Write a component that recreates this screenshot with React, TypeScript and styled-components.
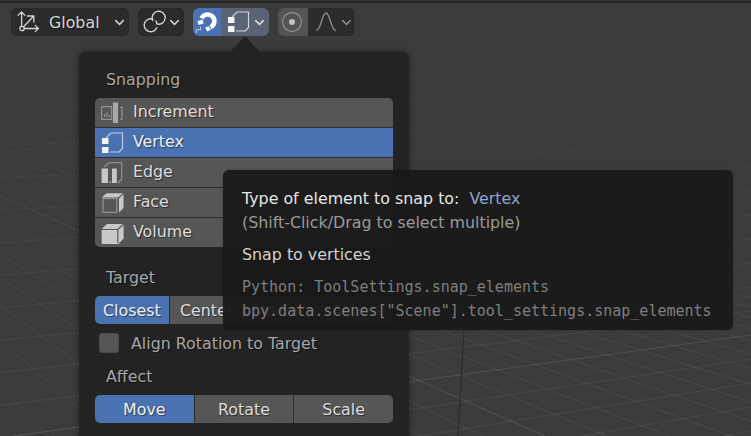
import React from "react";
import styled, { createGlobalStyle } from "styled-components";
import { ChevronDown } from "lucide-react";

const GlobalStyle = createGlobalStyle`
  html, body {
    margin: 0;
    padding: 0;
    background: #3b3b3b;
  }
`;

const Screen = styled.div`
  position: relative;
  width: 751px;
  height: 436px;
  overflow: hidden;
  background: #3b3b3b;
  font-family: "DejaVu Sans", sans-serif;
  font-size: 15.85px;
`;

const TopEdge = styled.div`
  height: 2px;
  background: #272727;
  border-top: 1px solid #333;
  position: relative;
`;

const Toolbar = styled.div`
  position: relative;
  display: flex;
  gap: 9px;
  padding: 5px 11px 0;
`;

const Pill = styled.div<{ $width: number }>`
  display: flex;
  width: ${(p) => p.$width}px;
  height: 28px;
  border-radius: 6px;
  overflow: hidden;
  background: #2b2b2b;
  color: #cfcfcf;
  box-shadow: inset 0 0 0 1px #282828;
`;

const PillPart = styled.div<{ $tone?: string; $width?: number; $inset?: number }>`
  display: flex;
  align-items: center;
  flex: ${(p) => (p.$width ? `0 0 ${p.$width}px` : "1")};
  padding-left: ${(p) => p.$inset ?? 0}px;
  background: ${(p) => p.$tone ?? "transparent"};
  svg {
    display: block;
    flex: none;
  }
`;

const GapEnd = styled.span`
  flex: none;
  width: 2px;
`;

const GlobalLabel = styled.span`
  margin-left: 9px;
  flex: 1;
  color: #d4d4d4;
  text-shadow: 1px 1px 1px rgba(0, 0, 0, 0.5);
`;

const Popover = styled.div`
  position: absolute;
  left: 79px;
  top: 52px;
  width: 330px;
  height: 400px;
  box-sizing: border-box;
  padding: 17px 16px 0;
  background: #232323;
  border-radius: 6px;
  box-shadow: 0 0 5px 1px rgba(0, 0, 0, 0.28);
`;

const Arrow = styled.div`
  position: absolute;
  left: 151px;
  top: -16px;
  width: 0;
  height: 0;
  border-left: 15px solid transparent;
  border-right: 15px solid transparent;
  border-bottom: 16px solid #232323;
`;

const SectionTitle = styled.div<{ $gap?: number }>`
  height: 20px;
  line-height: 22px;
  margin: ${(p) => p.$gap ?? 0}px 0 9px 11px;
  color: #a6a6a6;
  text-shadow: 1px 1px 1px rgba(0, 0, 0, 0.5);
`;

const OptionList = styled.div`
  display: flex;
  flex-direction: column;
  height: 149px;
  border-radius: 5px;
  overflow: hidden;
  background: #2c2c2c;
  gap: 1px;
`;

const Option = styled.div<{ $active?: boolean }>`
  flex: 1;
  display: flex;
  align-items: center;
  gap: 9px;
  padding-left: 5px;
  color: ${(p) => (p.$active ? "#f0f0f0" : "#dcdcdc")};
  background: ${(p) => (p.$active ? "#4b72b0" : "#565656")};
  text-shadow: 1px 1px 1px rgba(0, 0, 0, 0.5);
  svg {
    display: block;
    flex: none;
  }
`;

const OptionLabel = styled.span`
  margin-bottom: 2px;
`;

const Segmented = styled.div<{ $count: number }>`
  display: grid;
  grid-template-columns: repeat(${(p) => p.$count}, 1fr);
  gap: 1px;
  height: 28px;
  border-radius: 5px;
  overflow: hidden;
  background: #2c2c2c;
`;

const Segment = styled.div<{ $active?: boolean }>`
  display: flex;
  align-items: center;
  justify-content: center;
  color: ${(p) => (p.$active ? "#f0f0f0" : "#dcdcdc")};
  background: ${(p) => (p.$active ? "#4b72b0" : "#565656")};
  text-shadow: 1px 1px 1px rgba(0, 0, 0, 0.5);
`;

const CheckRow = styled.label`
  display: flex;
  align-items: center;
  gap: 12px;
  height: 20px;
  margin: 9px 0 0 4px;
  color: #a6a6a6;
  text-shadow: 1px 1px 1px rgba(0, 0, 0, 0.5);
`;

const CheckBox = styled.span`
  flex: none;
  width: 20px;
  height: 20px;
  border-radius: 4px;
  background: #565656;
  box-shadow: inset 0 0 0 1px #4a4a4a;
`;

const Tooltip = styled.div`
  position: absolute;
  left: 223px;
  top: 170px;
  width: 510px;
  height: 160px;
  box-sizing: border-box;
  padding: 17px 19px 0;
  border-radius: 6px;
  background: rgba(25, 25, 25, 0.95);
  box-shadow: 0 0 3px rgba(0, 0, 0, 0.2);
`;

const TipLine = styled.div<{ $color: string; $gap?: number; $mono?: boolean }>`
  height: 24px;
  line-height: 24px;
  white-space: pre;
  margin-top: ${(p) => p.$gap ?? 0}px;
  color: ${(p) => p.$color};
  font-family: ${(p) => (p.$mono ? '"DejaVu Sans Mono", monospace' : "inherit")};
  font-size: ${(p) => (p.$mono ? "15px" : "inherit")};
`;

const TipValue = styled.span`
  color: #8ea4cc;
`;

const GridCanvas = styled.svg`
  position: absolute;
  left: 0;
  top: 0;
`;

/* ground grid: two bundles of lines running to their vanishing points */
const horizon = 45;
const leftVp = -343;
const rightVp = 2867;

const towardLeft = Array.from({ length: 34 }, (_, i) => 545 + (i - 20) * 62);
const towardRight = Array.from({ length: 26 }, (_, i) => 335 + (i - 12) * 24);

const gridLines = () => (
  <GridCanvas width={751} height={436} viewBox="0 0 751 436">
    <defs>
      <linearGradient id="gridFade" gradientUnits="userSpaceOnUse" x1="0" y1="50" x2="0" y2="436">
        <stop offset="0" stopColor="#fff" stopOpacity="0" />
        <stop offset="0.25" stopColor="#fff" stopOpacity="0.025" />
        <stop offset="1" stopColor="#fff" stopOpacity="0.07" />
      </linearGradient>
      <linearGradient id="axisFade" gradientUnits="userSpaceOnUse" x1="0" y1="50" x2="0" y2="436">
        <stop offset="0" stopColor="#fff" stopOpacity="0" />
        <stop offset="0.3" stopColor="#fff" stopOpacity="0.05" />
        <stop offset="1" stopColor="#fff" stopOpacity="0.13" />
      </linearGradient>
    </defs>
    {towardLeft.map((x) => (
      <line
        key={`a${x}`}
        x1={leftVp}
        y1={horizon}
        x2={x}
        y2={436}
        stroke={x === 545 ? "url(#axisFade)" : "url(#gridFade)"}
      />
    ))}
    {towardRight.map((y) => {
      // y is the crossing at the right edge, carry the line on to x = 0
      const y0 = horizon + ((y - horizon) * rightVp) / (rightVp - 751);
      return (
        <line
          key={`b${y}`}
          x1={0}
          y1={y0}
          x2={751}
          y2={y}
          stroke={y === 335 ? "url(#axisFade)" : "url(#gridFade)"}
        />
      );
    })}
    <line x1={469} y1={240} x2={458} y2={436} stroke="#2b2b2b" />
    <circle cx={469} cy={234} r={8} fill="none" stroke="#2b2b2b" strokeDasharray="3 2" />
    <circle cx={469} cy={234} r={2.5} fill="#2b2b2b" />
  </GridCanvas>
);

const Chevron = ({ color = "#cfcfcf" }: { color?: string }) => (
  <ChevronDown size={15} strokeWidth={2.4} color={color} />
);

const OrientationIcon = () => (
  <svg width="24" height="24" viewBox="0 0 24 24" fill="none" stroke="#d2d2d2" strokeWidth="1.3" strokeLinecap="round" strokeLinejoin="round">
    <circle cx="6" cy="18.5" r="2.2" />
    <path d="M5.6 16.2V2M2 5.4L5.6 2l3.4 3.4M8.3 18.5h14M19.2 15.4l3.2 3.1-3.2 3.1M7.6 16.8L17.6 6.2M11.4 6h6.4v6.2" />
  </svg>
);

const LinkIcon = () => (
  <svg width="24" height="24" viewBox="0 0 24 24" fill="none" stroke="#d2d2d2" strokeWidth="1.4">
    <path d="M10 10.9A6.5 6.5 0 1 1 13.6 13.9" />
    <path d="M10.1 9.25A6.5 6.5 0 1 0 13.9 17.3" />
    <path d="M12.6 10.7A6.5 6.5 0 0 1 14.1 14.2" />
  </svg>
);

const MagnetIcon = () => (
  <svg width="28" height="28" viewBox="0 0 28 28" fill="none">
    <path d="M8.6 10.4A6.7 6.7 0 1 1 17.6 19.2" stroke="#fff" strokeWidth="4.6" />
    <path d="M4.4 13.2l5-1.6 1.4 3.6-5 1.8zM12.2 19.6l3.6-1.4 2 3.6-3.6 1.6z" fill="#fff" />
    <path d="M3.4 25v-3.3h4.2v-3" stroke="#b9cdea" strokeWidth="1.1" />
  </svg>
);

const VertexGlyph = ({ stroke }: { stroke: string }) => (
  <svg width="24" height="24" viewBox="0 0 24 24" fill="none">
    <rect x="2" y="7" width="6.5" height="6" fill="#f4f4f4" />
    <rect x="2" y="16" width="6.5" height="6" fill="#f4f4f4" />
    <path d="M6 7L11 2H22.5V17.5L19.2 21H10" stroke={stroke} strokeWidth="1.2" />
  </svg>
);

const ProportionalIcon = () => (
  <svg width="24" height="24" viewBox="0 0 24 24" fill="none">
    <circle cx="12" cy="12" r="9.5" stroke="#8c8c8c" strokeWidth="1.3" />
    <circle cx="12" cy="12" r="3" fill="#c4c4c4" />
  </svg>
);

const FalloffIcon = () => (
  <svg width="22" height="24" viewBox="0 0 22 24" fill="none">
    <path d="M1 20.5C6.5 20.5 6.5 3 11 3S15.5 20.5 21 20.5" stroke="#8c8c8c" strokeWidth="1.4" />
  </svg>
);

const IncrementIcon = () => (
  <svg width="24" height="24" viewBox="0 0 24 24" fill="none">
    <rect x="1.7" y="5.7" width="10" height="12.6" stroke="#9c9c9c" strokeWidth="1.1" />
    <path d="M4.5 16v-3M7 16v-5M9.4 16v-2" stroke="#9c9c9c" />
    <rect x="13" y="1.5" width="5" height="20.5" fill="#a8a8a8" />
    <path d="M20 6.2h2v12h-2" stroke="#9c9c9c" strokeWidth="1.1" />
  </svg>
);

const EdgeIcon = () => (
  <svg width="24" height="24" viewBox="0 0 24 24" fill="none">
    <path d="M4 6L9 1.7H21.7V18L18 22" stroke="#8f8f8f" strokeWidth="1.2" />
    <rect x="1.6" y="7.5" width="6.4" height="14.5" fill="#c8c8c8" />
    <rect x="12" y="7.5" width="4.8" height="14.5" fill="#c8c8c8" />
    <rect x="9.6" y="20" width="1.4" height="2" fill="#a8a8a8" />
  </svg>
);

const FaceIcon = () => (
  <svg width="24" height="24" viewBox="0 0 24 24" fill="none">
    <path d="M1.7 6.5L6.5 2.2H23L18 6.5z" fill="#c8c8c8" />
    <path d="M19 7.5L23.5 3V17L19 21.5z" fill="#c8c8c8" />
    <rect x="3" y="7.5" width="13.8" height="13.8" stroke="#8f8f8f" strokeWidth="1.3" />
  </svg>
);

const VolumeIcon = () => (
  <svg width="24" height="24" viewBox="0 0 24 24" fill="none">
    <path d="M1.7 8L7 3H23.6V17.5L18.5 23H1.7z" fill="#c8c8c8" />
    <path d="M17.8 8.5V22M1.7 8.5H17.8L23.6 3" stroke="#565656" strokeWidth="1.2" />
  </svg>
);

const App = () => {
  return (
    <Screen>
      <GlobalStyle />
      {gridLines()}
      <TopEdge />
      <Toolbar>
        <Pill $width={118}>
          <PillPart $inset={5}>
            <OrientationIcon />
            <GlobalLabel>Global</GlobalLabel>
            <Chevron />
            <GapEnd />
          </PillPart>
        </Pill>
        <Pill $width={46}>
          <PillPart $inset={5}>
            <LinkIcon />
            <Chevron />
          </PillPart>
        </Pill>
        <Pill $width={76}>
          <PillPart $tone="#4b72b0" $width={28}>
            <MagnetIcon />
          </PillPart>
          <PillPart $tone="#5b6475" $inset={5}>
            <VertexGlyph stroke="#cfd3da" />
            <GapEnd />
            <Chevron color="#dcdcdc" />
          </PillPart>
        </Pill>
        <Pill $width={76}>
          <PillPart $tone="#545454" $width={28} $inset={2}>
            <ProportionalIcon />
          </PillPart>
          <PillPart $inset={7}>
            <FalloffIcon />
            <GapEnd />
            <Chevron color="#8c8c8c" />
          </PillPart>
        </Pill>
      </Toolbar>

      <Popover>
        <Arrow />
        <SectionTitle>Snapping</SectionTitle>
        <OptionList>
          <Option>
            <IncrementIcon />
            <OptionLabel>Increment</OptionLabel>
          </Option>
          <Option $active>
            <VertexGlyph stroke="#b9cdea" />
            <OptionLabel>Vertex</OptionLabel>
          </Option>
          <Option>
            <EdgeIcon />
            <OptionLabel>Edge</OptionLabel>
          </Option>
          <Option>
            <FaceIcon />
            <OptionLabel>Face</OptionLabel>
          </Option>
          <Option>
            <VolumeIcon />
            <OptionLabel>Volume</OptionLabel>
          </Option>
        </OptionList>

        <SectionTitle $gap={20}>Target</SectionTitle>
        <Segmented $count={4}>
          <Segment $active>Closest</Segment>
          <Segment>Center</Segment>
          <Segment>Median</Segment>
          <Segment>Active</Segment>
        </Segmented>
        <CheckRow>
          <CheckBox />
          Align Rotation to Target
        </CheckRow>

        <SectionTitle $gap={13}>Affect</SectionTitle>
        <Segmented $count={3}>
          <Segment $active>Move</Segment>
          <Segment>Rotate</Segment>
          <Segment>Scale</Segment>
        </Segmented>
      </Popover>

      <Tooltip>
        <TipLine $color="#e6e6e6">
          Type of element to snap to:  <TipValue>Vertex</TipValue>
        </TipLine>
        <TipLine $color="#9a9a9a">(Shift-Click/Drag to select multiple)</TipLine>
        <TipLine $color="#d2d2d2" $gap={8}>
          Snap to vertices
        </TipLine>
        <TipLine $color="#7e7e7e" $gap={8} $mono>
          Python: ToolSettings.snap_elements
        </TipLine>
        <TipLine $color="#7e7e7e" $mono>
          bpy.data.scenes["Scene"].tool_settings.snap_elements
        </TipLine>
      </Tooltip>
    </Screen>
  );
};

export default App;
